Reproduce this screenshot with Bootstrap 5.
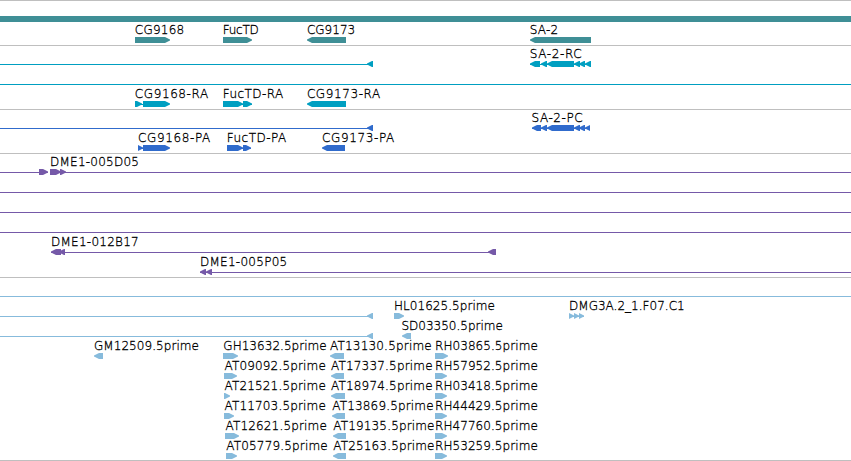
<!DOCTYPE html>
<html lang="en">
<head>
    <meta charset="UTF-8">
    <meta name="viewport" content="width=device-width, initial-scale=1.0">
    <title>Genome Browser</title>
    <link href="https://cdn.jsdelivr.net/npm/bootstrap@5.3.0/dist/css/bootstrap.min.css" rel="stylesheet">
    <style>
        body { overflow: hidden; background: #fff; }
        .track { border-top: 1px solid #bfbfbf; padding: 2px 0 1px; }
        .track:last-child { padding-bottom: 0; border-bottom: 1px solid #bfbfbf; }
        .lane { width: 851px; height: 20px; overflow: visible; }
        .lane rect { shape-rendering: crispEdges; }
        .lane-axis { height: 21px; }
        .lane text { font: 200 12px "DejaVu Sans", "DejaVu Sans Light", sans-serif; fill: #000; stroke: #000; stroke-width: .3px; }
        .track-gene { fill: #3f8f96; }
        .track-mrna { fill: #009fc1; }
        .track-cds { fill: #306bcc; }
        .track-bac { fill: #7559a8; }
        .track-est { fill: #87bbdc; }
    </style>
</head>
<body>
    <main class="container-fluid p-0 d-flex flex-column" id="browser"></main>

    <script src="https://cdn.jsdelivr.net/npm/bootstrap@5.3.0/dist/js/bootstrap.bundle.min.js"></script>
    <script>
        // lane: lines [from, to], exons [from, to, strand], labels [text, from, to]
        const END = 851;
        const tracks = [
            { type: "gene", lanes: [
                { axis: true },
                { exons: [[135, 170, 1], [223, 252, 1], [307, 346, -1], [530, 591, -1]],
                  labels: [["CG9168", 135.3, 184], ["FucTD", 223.3, 258.5], ["CG9173", 307.4, 355], ["SA-2", 529.7, 558]] }
            ]},
            { type: "mrna", lanes: [
                { lines: [[0, 373], [530, 591]],
                  exons: [[367, 373, -1], [530, 540, -1], [541, 547, -1], [547, 574, -1], [574, 580, -1], [579, 585, -1], [585, 591, -1]],
                  labels: [["SA-2-RC", 529.7, 581.5]] },
                { lines: [[0, END]] },
                { lines: [[135, 143], [223, 252]],
                  exons: [[135, 142, 1], [143, 170, 1], [223, 243, 1], [243, 252, 1], [307, 346, -1]],
                  labels: [["CG9168-RA", 135.3, 208], ["FucTD-RA", 223.3, 283], ["CG9173-RA", 307.4, 380]] }
            ]},
            { type: "cds", lanes: [
                { lines: [[0, 373], [532, 590]],
                  exons: [[367, 373, -1], [532, 541, -1], [541, 547, -1], [547, 574, -1], [574, 580, -1], [579, 585, -1], [585, 590, -1]],
                  labels: [["SA-2-PC", 531.5, 582.5]] },
                { lines: [[138, 143], [227, 251]],
                  exons: [[138, 143, 1], [143, 170, 1], [227, 243, 1], [243, 251, 1], [322, 345, -1]],
                  labels: [["CG9168-PA", 138.5, 210], ["FucTD-PA", 227.3, 286], ["CG9173-PA", 322.5, 394]] }
            ]},
            { type: "bac", lanes: [
                { lines: [[0, 48], [50, END]], exons: [[39, 48, 1], [50, 61, 1], [60, 66, 1]],
                  labels: [["DME1-005D05", 50.5, 138.8]] },
                { lines: [[0, END]] },
                { lines: [[0, END]] },
                { lines: [[0, END]] },
                { lines: [[51, 496]], exons: [[51, 61, -1], [59, 65, -1], [488, 496, -1]],
                  labels: [["DME1-012B17", 51.5, 138.5]] },
                { lines: [[200, END]], exons: [[200, 206, -1], [206, 212, -1]],
                  labels: [["DME1-005P05", 200.5, 287]] }
            ]},
            { type: "est", lanes: [
                { lines: [[0, END]] },
                { lines: [[0, 373], [569, 584]],
                  exons: [[367, 373, -1], [394, 404, 1], [569, 574, 1], [574, 579, 1], [579, 584, 1]],
                  labels: [["HL01625.5prime", 394.5, 494.7], ["DMG3A.2_1.F07.C1", 569.5, 684.5]] },
                { lines: [[0, 373]], exons: [[367, 373, -1], [402, 411, -1]],
                  labels: [["SD03350.5prime", 401.5, 502.7]] },
                { exons: [[94, 103, -1], [223, 238, 1], [330, 344, -1], [435, 448, 1]],
                  labels: [["GM12509.5prime", 94.5, 198.7], ["GH13632.5prime", 223.8, 326.5], ["AT13130.5prime", 330, 431.5], ["RH03865.5prime", 435.5, 537.6]] },
                { exons: [[224, 237, 1], [331, 344, -1], [435, 447, 1]],
                  labels: [["AT09092.5prime", 224.5, 325.6], ["AT17337.5prime", 331, 432.4], ["RH57952.5prime", 435.5, 537.6]] },
                { exons: [[224, 230, 1], [331, 345, -1], [435, 447, 1]],
                  labels: [["AT21521.5prime", 224.5, 325.6], ["AT18974.5prime", 331, 432.4], ["RH03418.5prime", 435.5, 537.6]] },
                { exons: [[224, 234, 1], [332, 345, -1], [435, 447, 1]],
                  labels: [["AT11703.5prime", 224.5, 325.6], ["AT13869.5prime", 332.3, 433.4], ["RH44429.5prime", 435.5, 537.6]] },
                { exons: [[225, 239, 1], [333, 346, -1], [435, 447, 1]],
                  labels: [["AT12621.5prime", 225.5, 326.6], ["AT19135.5prime", 333.3, 434.3], ["RH47760.5prime", 435.5, 537.6]] },
                { exons: [[226, 237, 1], [333, 346, -1], [435, 447, 1]],
                  labels: [["AT05779.5prime", 226.3, 327.5], ["AT25163.5prime", 333.3, 434.3], ["RH53259.5prime", 435.5, 537.6]] }
            ]}
        ];

        // box with a tapered head on its strand side
        function exon([from, to, strand]) {
            const head = Math.min(5, to - from);
            const tip = strand > 0 ? to : from;
            const back = strand > 0 ? from : to;
            const neck = tip - strand * head;
            return `<polygon points="${back},13 ${neck},13 ${tip},15.5 ${tip},16.5 ${neck},19 ${back},19"/>`;
        }

        function label([text, from, to]) {
            const pad = /^[AS]/.test(text) ? 0 : 0.5;
            return `<text x="${from - pad}" y="10" textLength="${(to - from + pad + 0.2).toFixed(1)}">${text}</text>`;
        }

        function lane(data) {
            if (data.axis) {
                return `<svg class="lane lane-axis d-block"><rect x="0" y="13" width="${END}" height="6"/></svg>`;
            }
            const lines = (data.lines || []).map(([a, b]) => `<rect x="${a}" y="16" width="${b - a}" height="1"/>`);
            const exons = (data.exons || []).map(exon);
            const labels = (data.labels || []).map(label);
            return `<svg class="lane d-block">${lines.join("")}${exons.join("")}${labels.join("")}</svg>`;
        }

        document.getElementById("browser").innerHTML = tracks.map(t =>
            `<section class="track track-${t.type}">${t.lanes.map(lane).join("")}</section>`
        ).join("");
    </script>
</body>
</html>
